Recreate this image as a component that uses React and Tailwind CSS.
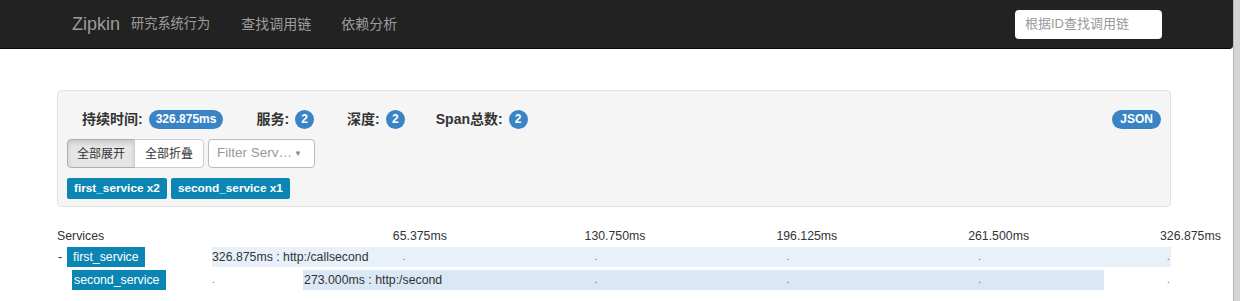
export default function App() {
  const ticks = ["65.375ms", "130.750ms", "196.125ms", "261.500ms", "326.875ms"];
  const dots = [20, 40, 60, 80, 100];
  const font = { fontFamily: '"Liberation Sans", Arial, "Noto Sans CJK SC", sans-serif' };
  const dotLeft = (d) => (d === 100 ? "calc(100% - 4px)" : `calc(${d}% - 1px)`);

  return (
    <div className="flex h-[301px] w-[1240px] overflow-hidden bg-white text-[#333]" style={font}>
      <div className="w-[1233px] flex-none">
        {/* Navbar */}
        <div className="flex h-[49px] items-center rounded-br-[4px] border-b border-[#080808] bg-[#222] pl-[72px] pr-[71px]">
          <span className="text-[18px] text-[#9d9d9d]">Zipkin</span>
          <span className="ml-[11px] text-[13.2px] text-[#9d9d9d]">研究系统行为</span>
          <span className="ml-[31px] text-[14px] text-[#9d9d9d]">查找调用链</span>
          <span className="ml-[30px] text-[14px] text-[#9d9d9d]">依赖分析</span>
          <div className="ml-auto flex h-[29px] w-[147px] items-center rounded-[4px] bg-white pl-[10px] text-[13px] text-[#999]">
            根据ID查找调用链
          </div>
        </div>

        {/* Summary panel */}
        <div className="ml-[57px] mt-[41px] w-[1114px] rounded-[4px] border border-[#e3e3e3] bg-[#f5f5f5] px-[9px] pb-[7px] pt-[9px]">
          <div className="flex h-[38px] items-center pl-[15px] text-[14px] font-bold text-[#333]">
            <span>持续时间:</span>
            <span className="ml-[6px] flex h-[19px] items-center rounded-full bg-[#3a84c5] px-[7px] text-[12px] font-bold text-white">326.875ms</span>
            <span className="ml-[33px]">服务:</span>
            <span className="ml-[6px] flex h-[19px] w-[19px] items-center justify-center rounded-full bg-[#3a84c5] text-[12px] text-white">2</span>
            <span className="ml-[33px]">深度:</span>
            <span className="ml-[6px] flex h-[19px] w-[19px] items-center justify-center rounded-full bg-[#3a84c5] text-[12px] text-white">2</span>
            <span className="ml-[31px]">Span总数:</span>
            <span className="ml-[6px] flex h-[19px] w-[19px] items-center justify-center rounded-full bg-[#3a84c5] text-[12px] text-white">2</span>
            <span className="ml-auto flex h-[19px] items-center rounded-full bg-[#3a84c5] px-[8px] text-[12px] font-bold text-white">JSON</span>
          </div>
          <div className="mt-px flex h-[29px] items-stretch text-[12px]">
            <div className="flex w-[68px] items-center justify-center rounded-l-[4px] border border-[#adadad] bg-[#e6e6e6] text-[#333] shadow-[inset_0_3px_5px_rgba(0,0,0,0.125)]">全部展开</div>
            <div className="-ml-px flex w-[70px] items-center justify-center rounded-r-[4px] border border-[#ccc] bg-white text-[#333]">全部折叠</div>
            <div className="ml-[4px] flex w-[107px] items-center justify-between overflow-hidden whitespace-nowrap rounded-[4px] border border-[#bbb] bg-white pl-[8px] pr-[12px] text-[13.5px] text-[#999]">
              <span>Filter Serv…</span>
              <span className="text-[8px] text-[#888]">▼</span>
            </div>
          </div>
          <div className="mt-[10px] flex gap-[4px]">
            <span className="flex h-[21px] items-center rounded-[2px] bg-[#0b86b4] px-[7px] text-[11.8px] font-bold text-white">first_service x2</span>
            <span className="flex h-[21px] items-center rounded-[2px] bg-[#0b86b4] px-[7px] text-[11.8px] font-bold text-white">second_service x1</span>
          </div>
        </div>

        {/* Timeline */}
        <div className="ml-[57px] mt-[20px] w-[1114px] text-[12.3px] text-[#333]">
          <div className="flex h-[18px] items-center">
            <div className="w-[155px] flex-none">Services</div>
            <div className="relative h-full flex-1">
              {ticks.map((t, i) => (
                <span key={t} className="absolute top-0 whitespace-nowrap leading-[18px]" style={{ left: `calc(${dots[i]}% - 11px)` }}>
                  {t}
                </span>
              ))}
            </div>
          </div>

          <div className="mt-[2px] flex h-[20px] items-stretch">
            <div className="flex w-[155px] flex-none items-center">
              <span className="w-[10px] pl-px">-</span>
              <span className="flex h-full items-center bg-[#0b86b4] px-[6px] text-white">first_service</span>
            </div>
            <div className="relative flex-1 bg-[#e8f1f9]">
              <span className="absolute left-0 top-0 whitespace-nowrap leading-[20px]">326.875ms : http:/callsecond</span>
              {dots.map((d) => (
                <span key={d} className="absolute top-0 text-[10px] leading-[20px] text-[#666]" style={{ left: dotLeft(d) }}>.</span>
              ))}
            </div>
          </div>

          <div className="mt-[3px] flex h-[20px] items-stretch">
            <div className="flex w-[155px] flex-none items-center pl-[15px]">
              <span className="flex h-full w-[94px] items-center bg-[#0b86b4] pl-[2px] text-white">second_service</span>
            </div>
            <div className="relative flex-1">
              <div className="absolute top-0 h-full bg-[#d9e8f4]" style={{ left: "9.5%", width: "83.5%" }} />
              <span className="absolute top-0 text-[10px] leading-[20px] text-[#666]" style={{ left: "0px" }}>.</span>
              {dots.slice(1).map((d) => (
                <span key={d} className="absolute top-0 text-[10px] leading-[20px] text-[#666]" style={{ left: dotLeft(d) }}>.</span>
              ))}
              <span className="absolute top-0 whitespace-nowrap pl-px leading-[20px]" style={{ left: "9.5%" }}>273.000ms : http:/second</span>
            </div>
          </div>
        </div>
      </div>
      <div className="w-[7px] flex-none border-l border-[#b5b5b5] bg-[#d4d4d4]" />
    </div>
  );
}
